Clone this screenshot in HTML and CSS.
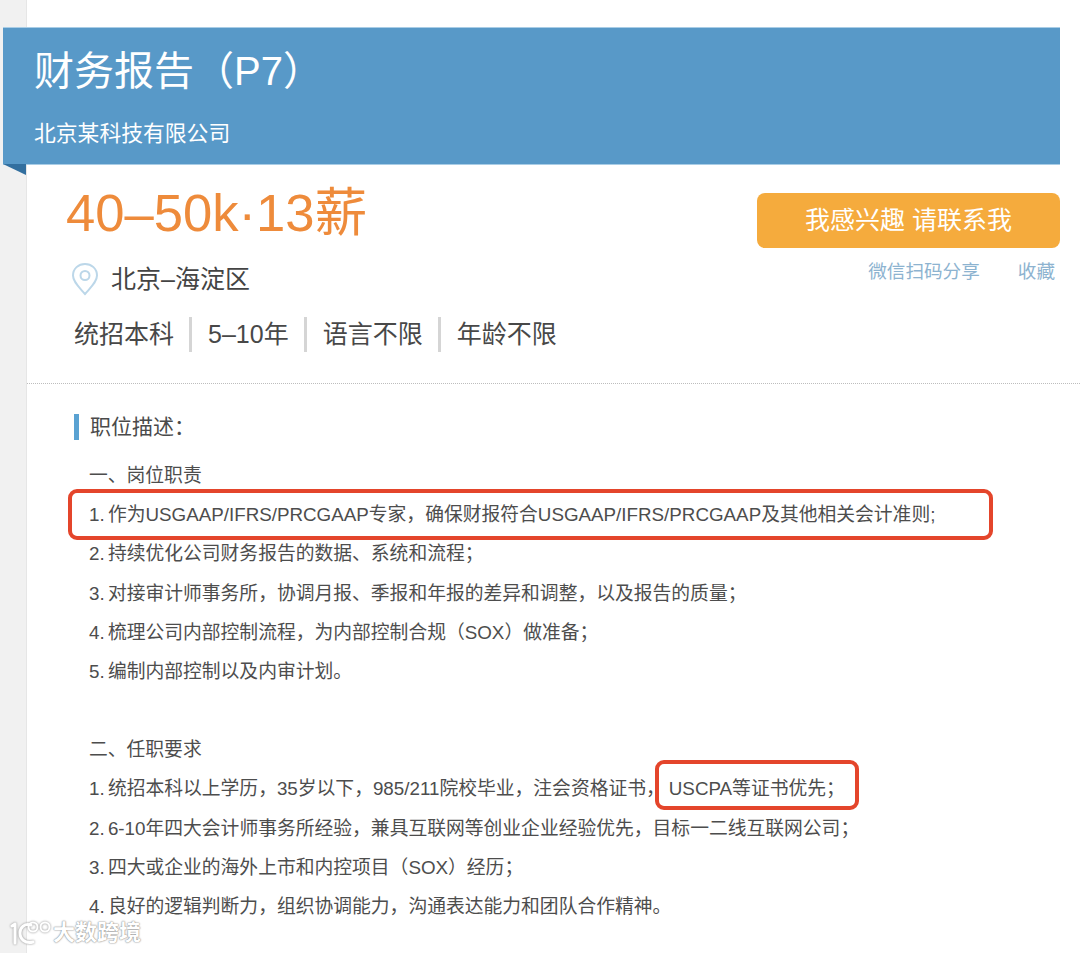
FILE: index.html
```html
<!DOCTYPE html>
<html lang="zh-CN">
<head>
<meta charset="utf-8">
<title>财务报告（P7）</title>
<link rel="stylesheet" href="styles.css">
</head>
<body>
<div class="page">
  <main class="sheet">
    <header class="banner">
      <h1 class="title">财务报告（P7）</h1>
      <p class="company">北京某科技有限公司</p>
      <span class="fold"></span>
    </header>
    <section class="summary">
      <div class="info">
        <div class="salary">40–50k·13薪</div>
        <div class="location">
          <svg class="pin" width="28" height="34" viewBox="0 0 28 34" fill="none" stroke="#bcd7e9" stroke-width="2">
            <path d="M14 32C8 25 2 20 2 13.5C2 6.5 7.5 2 14 2s12 4.5 12 11.5C26 20 20 25 14 32Z"/>
            <circle cx="14" cy="13.5" r="4.5"/>
          </svg>
          <span>北京–海淀区</span>
        </div>
        <ul class="tags">
          <li>统招本科</li>
          <li>5–10年</li>
          <li>语言不限</li>
          <li>年龄不限</li>
        </ul>
      </div>
      <div class="actions">
        <a class="apply">我感兴趣 请联系我</a>
        <div class="links"><a>微信扫码分享</a><a>收藏</a></div>
      </div>
    </section>
    <section class="desc">
      <h2 class="desc-title">职位描述：</h2>
      <div class="block">
        <p>一、岗位职责</p>
        <p class="boxed-line">1. 作为USGAAP/IFRS/PRCGAAP专家，确保财报符合USGAAP/IFRS/PRCGAAP及其他相关会计准则;</p>
        <p>2. 持续优化公司财务报告的数据、系统和流程；</p>
        <p>3. 对接审计师事务所，协调月报、季报和年报的差异和调整，以及报告的质量；</p>
        <p>4. 梳理公司内部控制流程，为内部控制合规（SOX）做准备；</p>
        <p>5. 编制内部控制以及内审计划。</p>
      </div>
      <div class="block">
        <p>二、任职要求</p>
        <p>1. 统招本科以上学历，35岁以下，985/211院校毕业，注会资格证书，<span class="boxed-word">USCPA等证书优先；</span></p>
        <p>2. 6-10年四大会计师事务所经验，兼具互联网等创业企业经验优先，目标一二线互联网公司；</p>
        <p>3. 四大或企业的海外上市和内控项目（SOX）经历；</p>
        <p>4. 良好的逻辑判断力，组织协调能力，沟通表达能力和团队合作精神。</p>
      </div>
    </section>
  </main>
</div>
<div class="watermark">
  <svg width="44" height="26" viewBox="0 0 44 26" fill="none" stroke="#fff" stroke-width="3">
    <path d="M3 6L6 4V23" stroke-linecap="round" stroke-linejoin="round"/>
    <path d="M22 5C15 3 11 8 11 13C11 19 16 24 24 22" stroke-linecap="round"/>
    <circle cx="24" cy="7" r="4.5" stroke-width="2"/>
    <circle cx="36" cy="7" r="4.5" stroke-width="2"/>
  </svg>
  <span>大数跨境</span>
</div>
</body>
</html>
```
FILE: styles.css
```css
*, *::before, *::after { box-sizing: border-box; }
html, body { margin: 0; padding: 0; }
body {
  width: 1080px;
  height: 953px;
  overflow: hidden;
  background: #f1f1f1;
  font-family: "Liberation Sans", "Noto Sans CJK SC", sans-serif;
  color: #454545;
  position: relative;
}
.page { padding-left: 26px; height: 953px; }
.sheet {
  height: 953px;
  background: #fff;
  padding-top: 27px;
  border-left: 1px solid #e6e6e6;
}
.banner {
  position: relative;
  margin-left: -24px;
  width: 1057px;
  height: 138px;
  background: #5899c8;
  color: #fff;
  padding: 18px 0 0 31px;
  border-top: 1px solid #a9cde6;
  border-bottom: 1px solid #a9cde6;
}
.title { margin: 0; font-size: 40px; font-weight: 400; line-height: 50px; }
.company { margin: 22px 0 0; font-size: 21.8px; line-height: 32px; }
.fold {
  position: absolute;
  left: 0;
  top: 136px;
  border-top: 11px solid #326f9f;
  border-left: 23px solid transparent;
}
.summary {
  display: flex;
  justify-content: space-between;
  height: 219px;
  border-bottom: 1px dotted #bdbdbd;
  padding-left: 39px;
}
.salary {
  font-size: 52.6px;
  line-height: 60px;
  color: #ee8b3b;
  margin-top: 18px;
}
.location {
  display: flex;
  align-items: center;
  gap: 12px;
  margin: 19px 0 0 5px;
  font-size: 25px;
  line-height: 34px;
  color: #444;
}
.tags {
  display: flex;
  margin: 21px 0 0 8px;
  padding: 0;
  list-style: none;
  font-size: 25px;
  line-height: 35px;
  color: #484848;
}
.tags li { padding-right: 15px; margin-right: 16px; border-right: 3px solid #d5d5d5; }
.tags li:last-child { border-right: 0; }
.actions {
  width: 303px;
  margin: 28px 20px 0 0;
}
.apply {
  display: block;
  height: 55px;
  line-height: 55px;
  border-radius: 8px;
  background: #f5ab3d;
  color: #fff;
  text-align: center;
  font-size: 25px;
}
.links {
  display: flex;
  justify-content: flex-end;
  gap: 38px;
  padding-right: 5px;
  margin-top: 10px;
  font-size: 18.6px;
  line-height: 28px;
  color: #8db3d0;
}
.desc { padding: 30px 0 0 47px; }
.desc-title {
  margin: 0;
  font-size: 21px;
  font-weight: 400;
  line-height: 26px;
  border-left: 5px solid #5aa2d2;
  padding-left: 11px;
  color: #4a4a4a;
}
.block {
  padding-left: 15px;
  margin-top: 16px;
  font-size: 18.8px;
  word-spacing: -2px;
  color: #4d4d4d;
}
.block + .block { margin-top: 39px; }
.block p { margin: 0; height: 39.2px; line-height: 39px; white-space: nowrap; }
.boxed-line { position: relative; }
.boxed-line::after {
  content: "";
  position: absolute;
  left: -21px;
  top: -6px;
  width: 925px;
  height: 51px;
  border: 4px solid #e4452b;
  border-radius: 9px;
}
.boxed-word { position: relative; margin-left: 4px; }
.boxed-word::after {
  content: "";
  position: absolute;
  left: -14px;
  right: -14px;
  top: -18px;
  height: 50px;
  border: 4px solid #e4452b;
  border-radius: 9px;
}
.watermark {
  position: absolute;
  left: 9px;
  top: 918px;
  display: flex;
  align-items: center;
  gap: 0;
  color: #fff;
  font-size: 22px;
  font-weight: 700;
  line-height: 30px;
  text-shadow: 0 0 2px #8a8a8a, 0 0 1px #8a8a8a;
}
.watermark svg { filter: drop-shadow(0 0 1px #8a8a8a); }
```
